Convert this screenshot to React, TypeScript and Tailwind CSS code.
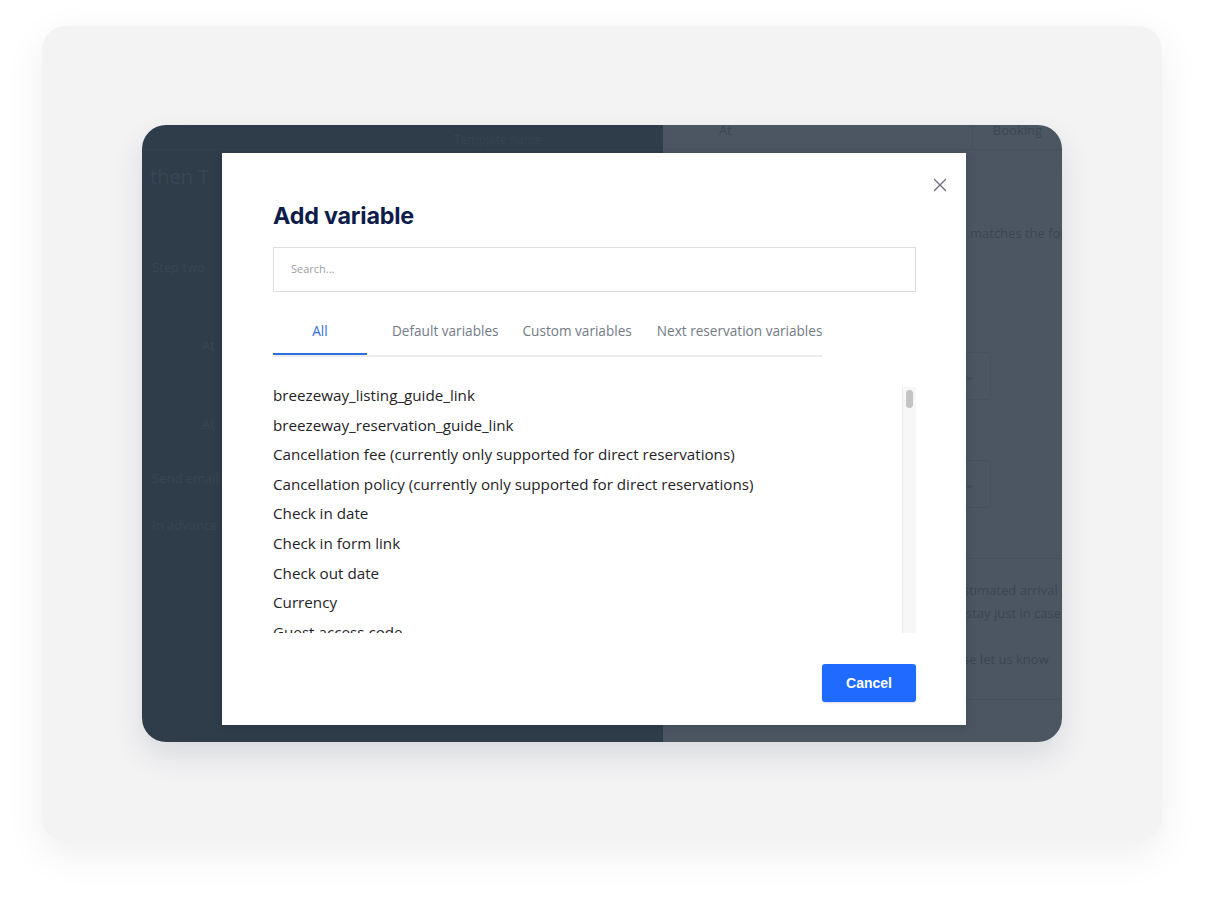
import React from "react";

const items = [
  "breezeway_listing_guide_link",
  "breezeway_reservation_guide_link",
  "Cancellation fee (currently only supported for direct reservations)",
  "Cancellation policy (currently only supported for direct reservations)",
  "Check in date",
  "Check in form link",
  "Check out date",
  "Currency",
  "Guest access code",
  "Guest email",
];

export default function App() {
  return (
    <div className="w-[1206px] h-[902px] bg-white pt-[26px] px-[42px] font-['Open_Sans',sans-serif]">
      <div className="w-[1120px] h-[816px] rounded-[24px] bg-[#f3f3f4] shadow-[0_12px_40px_rgba(0,0,0,0.07)] pt-[99px] px-[100px]">
        <div className="relative w-[920px] h-[617px] rounded-[24px] overflow-hidden flex shadow-[0_14px_30px_rgba(40,50,70,0.12)]">
          {/* left underlying page (dimmed) */}
          <div className="w-[521px] shrink-0 h-full bg-[#2f3d4b] flex flex-col text-[#384552] text-[15px] whitespace-nowrap overflow-hidden">
            <div className="h-[25px] border-b border-[#33414e] flex items-end pl-[312px] text-[12px] text-[#36434f]">
              <span>Template name</span>
            </div>
            <div className="pl-[8px] pt-[12px] text-[20px] text-[#394654]">then T</div>
            <div className="pl-[10px] pt-[66px] text-[13px]">Step two</div>
            <div className="pl-[60px] pt-[58px] text-[13px]">At</div>
            <div className="pl-[60px] pt-[60px] text-[13px]">At</div>
            <div className="pl-[10px] pt-[34px] text-[13px]">Send email</div>
            <div className="pl-[10px] pt-[28px] text-[13px]">In advance</div>
          </div>
          {/* right underlying page (dimmed) */}
          <div className="flex-1 min-w-0 h-full bg-[#4b5662] flex flex-col text-[#3b4653] text-[13px] whitespace-nowrap overflow-hidden">
            <div className="h-[25px] border-b border-[#46515d] flex items-start">
              <span className="pl-[56px] -mt-[4px]">At</span>
              <div className="ml-[240px] h-full border-l border-[#46515d]" />
              <span className="pl-[20px] -mt-[4px]">Booking</span>
            </div>
            <div className="pl-[307px] pt-[74px] text-[13px]">matches the following</div>
            <div className="ml-[250px] mt-[108px] w-[78px] h-[48px] border border-[#46515d] rounded-[3px] flex items-center pl-[50px] text-[#3e4956]">⌄</div>
            <div className="ml-[250px] mt-[60px] w-[78px] h-[48px] border border-[#46515d] rounded-[3px] flex items-center pl-[50px] text-[#3e4956]">⌄</div>
            <div className="mt-[50px] border-t border-[#46515d]" />
            <div className="pl-[300px] pt-[20px] leading-[23px]">stimated arrival time</div>
            <div className="pl-[303px] leading-[23px]">stay just in case</div>
            <div className="pl-[300px] pt-[23px] leading-[23px]">se let us know</div>
            <div className="mt-[28px] border-t border-[#46515d]" />
          </div>

          {/* modal */}
          <div className="absolute left-[80px] top-[28px] w-[744px] h-[572px] bg-white shadow-[0_2px_8px_rgba(0,0,0,0.15)] pl-[51px] pr-[50px] flex flex-col">
            <button className="absolute right-[18px] top-[24px] w-[16px] h-[16px] text-[#6b7280]">
              <svg viewBox="0 0 16 16" width="16" height="16" fill="none" stroke="currentColor" strokeWidth="1.4" strokeLinecap="round">
                <path d="M2.5 2.5l11 11M13.5 2.5l-11 11" />
              </svg>
            </button>
            <h2 className="pt-[47px] text-[23.3px] leading-[32px] font-bold text-[#0e1c4a] font-['Inter',sans-serif] tracking-[-0.2px]">
              Add variable
            </h2>
            <div className="mt-[15px] h-[45px] border border-[#dedede] flex items-center pl-[17px] text-[11px] text-[#9aa0a6]">
              Search...
            </div>
            <div className="mt-[21px] flex self-start border-b-2 border-[#ececec] text-[13.6px] leading-[18px] text-[#737b85]">
              <div className="w-[94px] h-[42px] pt-[9px] text-center text-[#2f6fe0] border-b-2 border-[#2f6fe0] -mb-[2px]">All</div>
              <div className="ml-[25px] h-[42px] pt-[9px]">Default variables</div>
              <div className="ml-[24px] h-[42px] pt-[9px]">Custom variables</div>
              <div className="ml-[25px] h-[42px] pt-[9px]">Next reservation variables</div>
            </div>
            <div className="mt-[24px] flex h-[252px]">
              <div className="flex-1 overflow-hidden">
                {items.map((t) => (
                  <div key={t} className="h-[29.6px] leading-[29.6px] text-[15.2px] text-[#1f2328] whitespace-nowrap">
                    {t}
                  </div>
                ))}
              </div>
              <div className="w-[14px] mt-[6px] bg-[#f7f7f7] border-l border-[#ececec] flex justify-center pt-[3px]">
                <div className="w-[7px] h-[18px] rounded-full bg-[#c3c3c3]" />
              </div>
            </div>
            <div className="mt-[31px] flex justify-end">
              <button className="w-[94px] h-[38px] rounded-[3px] bg-[#1f6bff] text-white text-[14px] font-bold font-['Liberation_Sans',sans-serif] shadow-[0_1px_2px_rgba(0,0,0,0.15)]">
                Cancel
              </button>
            </div>
          </div>
        </div>
      </div>
    </div>
  );
}
